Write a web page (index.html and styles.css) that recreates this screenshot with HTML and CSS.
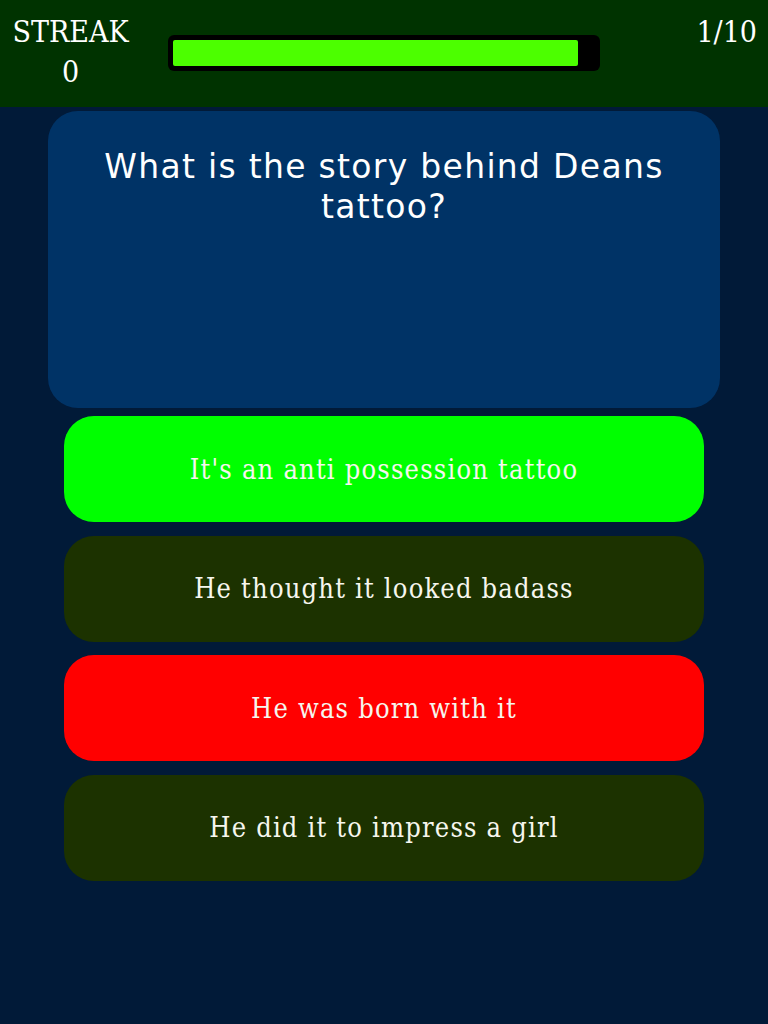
FILE: index.html
```html
<!DOCTYPE html>
<html lang="en">
<head>
    <meta charset="UTF-8">
    <meta name="viewport" content="width=device-width, initial-scale=1.0">
    <title>Quiz</title>
    <link rel="stylesheet" href="styles.css">
</head>
<body>
    <div class="topbar">
        <div class="streak">
            <div>STREAK</div>
            <div>0</div>
        </div>
        <div class="progress">
            <div class="progress-fill" style="width: 96%"></div>
        </div>
        <div class="count">1/10</div>
    </div>
    <div class="quiz">
        <div class="question">What is the story behind Deans tattoo?</div>
        <div class="answers">
            <div class="answer correct">It's an anti possession tattoo</div>
            <div class="answer">He thought it looked badass</div>
            <div class="answer wrong">He was born with it</div>
            <div class="answer">He did it to impress a girl</div>
        </div>
    </div>
</body>
</html>
```

FILE: styles.css
```css
body {
    margin: 0;
    padding: 0;
    background: #011a38;
    color: #fff;
    font-family: 'DejaVu Serif', serif;
    min-height: 1024px;
}
.topbar {
    background: #003300;
    height: 107px;
    display: flex;
    align-items: flex-start;
    padding: 0 11px;
    box-sizing: border-box;
}
.streak {
    font-size: 30px;
    font-stretch: condensed;
    text-align: center;
    line-height: 40px;
    padding-top: 12px;
    width: 119px;
}
.progress {
    margin: 35px 0 0 38px;
    width: 432px;
    height: 36px;
    background: #000;
    border-radius: 6px;
    padding: 5px;
    box-sizing: border-box;
}
.progress-fill {
    height: 100%;
    background: #4cff00;
    border-radius: 2px;
}
.count {
    margin-left: auto;
    font-size: 30px;
    font-stretch: condensed;
    line-height: 40px;
    padding-top: 12px;
}
.quiz {
    padding: 4px 48px 0;
}
.question {
    background: #003366;
    border-radius: 30px;
    height: 297px;
    box-sizing: border-box;
    padding: 36px 50px 0;
    text-align: center;
    font-family: 'DejaVu Sans', sans-serif;
    font-size: 33px;
    line-height: 40px;
    letter-spacing: 1.3px;
}
.answers {
    display: flex;
    flex-direction: column;
    gap: 13.5px;
    padding: 8px 16px 0;
}
.answer {
    height: 106px;
    border-radius: 30px;
    background: #1c3200;
    display: flex;
    align-items: center;
    justify-content: center;
    font-size: 27px;
    font-stretch: condensed;
    letter-spacing: 1.2px;
    color: #f6f6ee;
}
.answer.correct {
    background: #00ff00;
}
.answer.wrong {
    background: #ff0000;
}
```
